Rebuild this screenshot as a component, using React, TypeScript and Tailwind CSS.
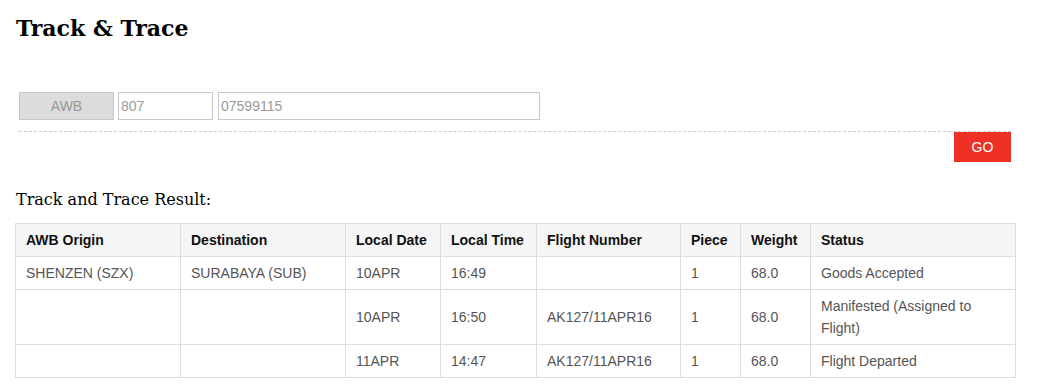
const rows = [
  { origin: "SHENZEN (SZX)", dest: "SURABAYA (SUB)", date: "10APR", time: "16:49", flight: "", piece: "1", weight: "68.0", status: "Goods Accepted" },
  { origin: "", dest: "", date: "10APR", time: "16:50", flight: "AK127/11APR16", piece: "1", weight: "68.0", status: "Manifested (Assigned to Flight)" },
  { origin: "", dest: "", date: "11APR", time: "14:47", flight: "AK127/11APR16", piece: "1", weight: "68.0", status: "Flight Departed" },
];

const headers = ["AWB Origin", "Destination", "Local Date", "Local Time", "Flight Number", "Piece", "Weight", "Status"];
const widths = [165, 165, 95, 96, 144, 60, 70, 205];

export default function App() {
  return (
    <div className="min-h-[392px] bg-white pl-[15px] font-['Liberation_Sans',Arial,sans-serif] text-[14px]">
      <h1 className="pt-[14px] pl-[1px] font-['DejaVu_Serif',serif] text-[22px] leading-[28px] font-bold text-black">
        Track &amp; Trace
      </h1>

      <div className="ml-[4px] mt-[50px] w-[992px]">
        <div className="flex border-b border-dashed border-[#cccccc] pb-[11px]">
          <div className="flex h-[28px] w-[95px] items-center justify-center border border-[#c8c8c8] bg-[#dcdcdc] text-[14px] text-[#999999]">
            AWB
          </div>
          <div className="ml-[4px] flex h-[28px] w-[95px] items-center border border-[#c8c8c8] pl-[2px] text-[14px] text-[#999999]">
            807
          </div>
          <div className="ml-[5px] flex h-[28px] w-[322px] items-center border border-[#c8c8c8] pl-[2px] text-[14px] text-[#999999]">
            07599115
          </div>
        </div>
        <div className="flex justify-end">
          <button className="h-[30px] w-[57px] bg-[#ee3124] text-[14px] text-white">GO</button>
        </div>
      </div>

      <h2 className="mt-[27px] pl-[1px] font-['DejaVu_Serif',serif] text-[16px] leading-[22px] text-black">
        Track and Trace Result:
      </h2>

      <table className="mt-[12px] w-[1000px] table-fixed border-collapse">
        <colgroup>
          {widths.map((w, i) => (
            <col key={i} style={{ width: w }} />
          ))}
        </colgroup>
        <thead>
          <tr className="bg-[#f5f5f5]">
            {headers.map((h) => (
              <th key={h} className="border border-[#dddddd] px-[10px] py-[5px] text-left align-middle leading-[22px] font-bold text-[#111111]">
                {h}
              </th>
            ))}
          </tr>
        </thead>
        <tbody>
          {rows.map((r, i) => (
            <tr key={i}>
              {[r.origin, r.dest, r.date, r.time, r.flight, r.piece, r.weight, r.status].map((c, j) => (
                <td key={j} className="border border-[#dddddd] px-[10px] py-[5px] align-middle leading-[22px] text-[#555555]">
                  {c}
                </td>
              ))}
            </tr>
          ))}
        </tbody>
      </table>
    </div>
  );
}
